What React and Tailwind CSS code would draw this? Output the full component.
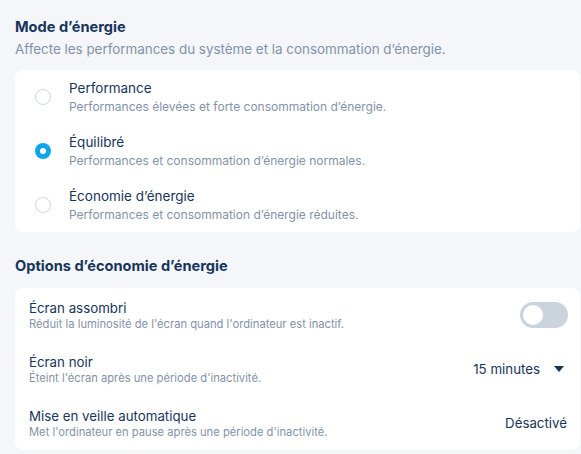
import React from "react";

const modes = [
  { title: "Performance", desc: "Performances élevées et forte consommation d’énergie.", checked: false },
  { title: "Équilibré", desc: "Performances et consommation d’énergie normales.", checked: true },
  { title: "Économie d’énergie", desc: "Performances et consommation d’énergie réduites.", checked: false },
];

function Radio({ checked }) {
  if (checked) {
    return (
      <div className="w-4 h-4 rounded-full bg-[#0ea5e9] flex items-center justify-center shrink-0">
        <div className="w-[6px] h-[6px] rounded-full bg-white" />
      </div>
    );
  }
  return <div className="w-4 h-4 rounded-full border border-[#cfd6df] bg-white shrink-0" />;
}

export default function App() {
  return (
    <div
      className="w-[581px] h-[454px] bg-[#f4f6fa] pl-[15px] pr-[1px] pt-[16px] overflow-hidden"
      style={{ fontFamily: "Inter, 'Noto Sans', sans-serif" }}
    >
      <h1 className="text-[14.6px] leading-[22px] font-bold text-[#17355a]">Mode d’énergie</h1>
      <p className="mt-[1px] text-[13.4px] leading-[20px] text-[#8393a7]">
        Affecte les performances du système et la consommation d’énergie.
      </p>
      <div className="mt-[11px] bg-white rounded-lg">
        {modes.map((m) => (
          <div key={m.title} className="h-[54px] flex items-center pl-5 gap-[18px]">
            <Radio checked={m.checked} />
            <div className="flex flex-col -mt-[1px]">
              <span className="text-[13.5px] leading-[18px] text-[#17355a]">{m.title}</span>
              <span className="mt-[1px] text-[12px] leading-[17px] text-[#8393a7]">{m.desc}</span>
            </div>
          </div>
        ))}
      </div>

      <h2 className="mt-[23px] text-[14.6px] leading-[22px] font-bold text-[#17355a]">
        Options d’économie d’énergie
      </h2>
      <div className="mt-[11px] bg-white rounded-lg">
        <div className="h-[54px] flex items-center justify-between pl-[14px] pr-3">
          <div className="flex flex-col -mt-[1px]">
            <span className="text-[13.3px] leading-[18px] text-[#17355a]">Écran assombri</span>
            <span className="text-[11.2px] leading-[14px] text-[#8393a7]">
              Réduit la luminosité de l'écran quand l'ordinateur est inactif.
            </span>
          </div>
          <div className="w-12 h-[26px] rounded-full bg-[#cbd3dd] flex items-center px-[3px]">
            <div className="w-5 h-5 rounded-full bg-white" />
          </div>
        </div>
        <div className="h-[54px] flex items-center justify-between pl-[14px] pr-[16px]">
          <div className="flex flex-col -mt-[1px]">
            <span className="text-[13.3px] leading-[18px] text-[#17355a]">Écran noir</span>
            <span className="text-[11.2px] leading-[14px] text-[#8393a7]">
              Éteint l'écran après une période d'inactivité.
            </span>
          </div>
          <div className="flex items-center gap-[14px] -mt-[1px]">
            <span className="text-[13.3px] leading-[18px] text-[#17355a]">15 minutes</span>
            <svg width="10" height="6" viewBox="0 0 10 6">
              <path d="M0 0 L10 0 L5 6 Z" fill="#17355a" />
            </svg>
          </div>
        </div>
        <div className="h-[54px] flex items-center justify-between pl-[14px] pr-[13px]">
          <div className="flex flex-col -mt-[1px]">
            <span className="text-[13.3px] leading-[18px] text-[#17355a]">Mise en veille automatique</span>
            <span className="text-[11.2px] leading-[14px] text-[#8393a7]">
              Met l'ordinateur en pause après une période d'inactivité.
            </span>
          </div>
          <span className="text-[13.3px] leading-[18px] text-[#17355a] -mt-[1px]">Désactivé</span>
        </div>
      </div>
    </div>
  );
}
